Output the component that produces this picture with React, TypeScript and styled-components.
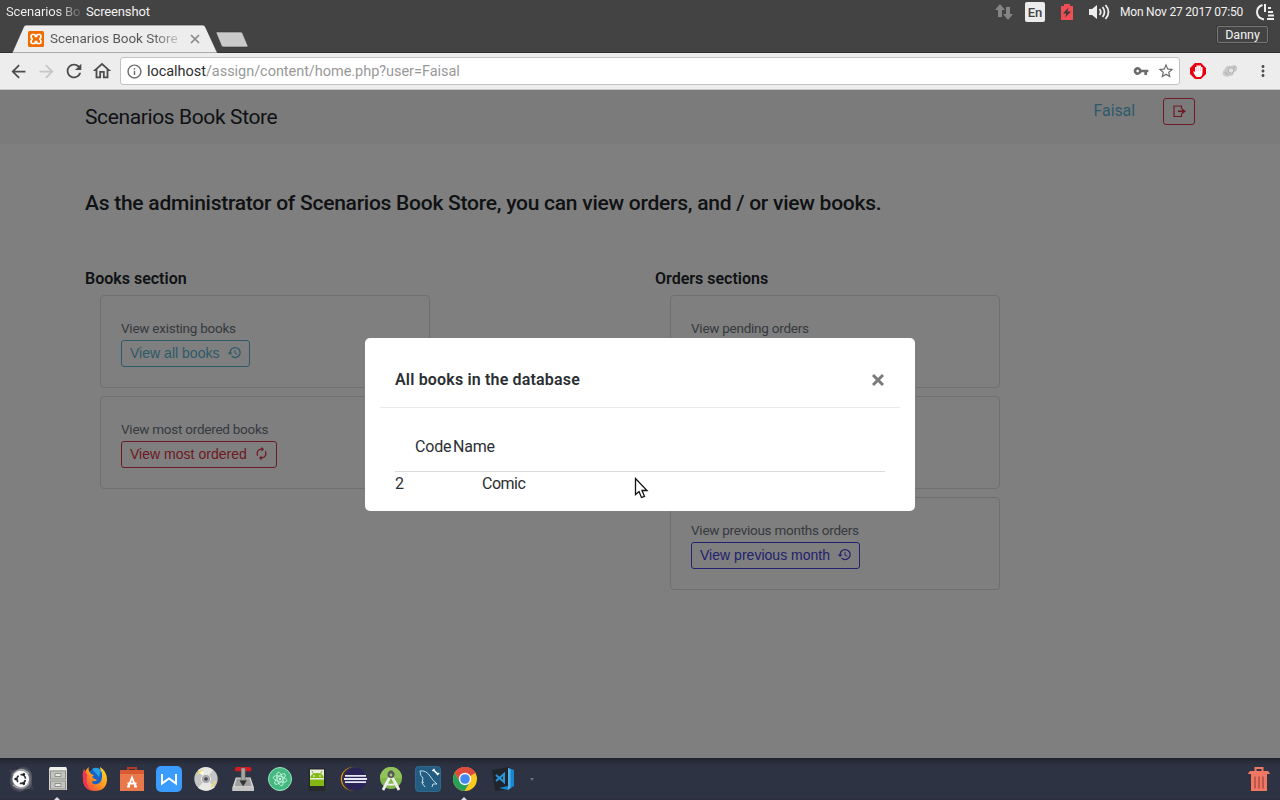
import React from 'react';
import styled, { createGlobalStyle } from 'styled-components';
import { MdArrowBack, MdArrowForward, MdRefresh, MdOutlineHome, MdInfoOutline, MdVpnKey, MdStarBorder, MdMoreVert, MdHistory, MdAutorenew } from 'react-icons/md';

const Global = createGlobalStyle`
  * { box-sizing: border-box; }
  body { margin: 0; font-family: Roboto, "Liberation Sans", sans-serif; overflow: hidden; }
  svg { display: block; flex: none; }
`;

const Desktop = styled.div`
  width: 1280px; height: 800px; display: flex; flex-direction: column; position: relative; overflow: hidden;
`;

/* System panel */
const Panel = styled.div`
  height: 24px; background: #434343; color: #f2f2f2; display: flex; align-items: center;
  padding: 0 5px 0 6px; font-size: 13px; line-height: 22px; white-space: nowrap; flex: none;
`;
const WindowTitle = styled.div`
  width: 80px; letter-spacing: -0.15px;
  background: linear-gradient(90deg, #f2f2f2 65%, #4a4a4a 97%);
  background-clip: text; -webkit-background-clip: text; color: transparent;
`;
const MenuTitle = styled.div`flex: 1; letter-spacing: -0.15px;`;
const Tray = styled.div`display: flex; align-items: center; height: 24px;`;
const TrayItem = styled.div<{ $gap: number }>`margin-right: ${p => p.$gap}px; display: flex;`;
const Language = styled.div`
  width: 20px; height: 20px; border-radius: 2px; background: #ececec; color: #434343;
  font: 500 13px/21px Roboto, sans-serif; text-align: center;
`;
const Clock = styled.div`width: 124px; margin-right: 12px; font-size: 12px; letter-spacing: -0.2px;`;

/* Tab strip */
const TabStrip = styled.div`
  height: 29px; background: #434343; border-bottom: 1px solid #303030; display: flex; align-items: flex-start;
  padding-left: 12px; flex: none;
`;
const Tab = styled.div`
  position: relative; width: 206px; height: 29px; display: flex; align-items: center; padding: 0 0 0 16px;
  z-index: 1;
`;
const TabShape = styled.svg`position: absolute; left: 0; top: 0; z-index: -1;`;
const TabTitle = styled.div`
  margin-left: 6px; width: 140px; font-size: 13.5px; letter-spacing: -0.05px; white-space: nowrap; padding-bottom: 2px;
  background: linear-gradient(90deg, #555 73%, #c8c8c8 92%);
  background-clip: text; -webkit-background-clip: text; color: transparent; flex: none;
`;
const NewTab = styled.svg`margin: 7px 0 0 -2px;`;
const Profile = styled.div`
  margin: 2px 12px 0 auto; width: 51px; height: 17px; border: 1px solid #777; border-radius: 2px; box-shadow: 0 0 0 1px #3a3a3a;
  color: #f4f4f4; font-size: 12.5px; line-height: 15px; text-align: center;
`;

/* Toolbar */
const Toolbar = styled.div`
  height: 37px; background: #ededed; border-bottom: 1px solid #c9c9c9; display: flex; align-items: center;
  padding: 0 8px 0 7px; color: #505050; flex: none;
`;
const NavButton = styled.div<{ $off?: boolean }>`
  width: 28px; height: 28px; display: flex; align-items: center; justify-content: center; color: ${p => (p.$off ? '#c6c6c6' : '#4d4d4d')};
  padding-right: 6px;
`;
const AddressBar = styled.div`
  width: 1060px; height: 28px; margin-left: 1px; background: #fff; border: 1px solid #c2c2c2; border-radius: 3px;
  display: flex; align-items: center; padding: 0 4px 0 5px; color: #6b6b6b;
`;
const Url = styled.div`
  flex: 1; margin-left: 4px; font-size: 14.5px; letter-spacing: -0.04px; color: #999; line-height: 26px; padding-top: 1px;
  span { color: #2e2e2e; }
`;
const KeyIcon = styled.div`width: 24px;`;
const Extensions = styled.div`display: flex; align-items: center; gap: 16px; padding-left: 10px;`;

/* Web page */
const Viewport = styled.main`flex: 1; background: #fff; color: #212529; position: relative; min-height: 0;`;
const SiteHeader = styled.header`
  height: 54px; background: #f7f7f8; padding: 0 85px; display: flex; align-items: flex-start;
`;
const Brand = styled.div`
  flex: 1; font-size: 21px; letter-spacing: -0.38px; line-height: 54px;
`;
const UserLink = styled.div`color: #5bb5d3; font-size: 16px; line-height: 41px; margin-right: 28px; letter-spacing: -0.1px;`;
const LogoutButton = styled.div`
  width: 32px; height: 27px; margin-top: 8px; border: 1px solid #dc3545; border-radius: 3px; color: #dc3545;
  display: flex; align-items: center; justify-content: center;
`;
const Headline = styled.h1`
  margin: 0; padding: 45px 85px 0; font-size: 21px; font-weight: 550; letter-spacing: -0.25px; line-height: 29px;
  white-space: nowrap;
`;
const Columns = styled.div`display: flex; padding: 49px 55px 0 85px;`;
const Column = styled.section`width: 570px;`;
const SectionTitle = styled.h2`margin: 0; font-size: 16px; font-weight: 600; line-height: 24px; height: 28px;`;
const Card = styled.div`
  width: 330px; height: 93px; margin: 0 0 8px 15px; padding: 22px 20px 0; border: 1px solid #dfdfdf; border-radius: 4px;
`;
const CardText = styled.div`
  color: #6c757d; font-size: 13.5px; letter-spacing: -0.25px; line-height: 21px; height: 22px; white-space: nowrap;
`;
const CardButton = styled.div<{ $color: string }>`
  display: inline-flex; align-items: center; height: 27px; padding: 0 8px; border: 1px solid ${p => p.$color}; border-radius: 3px;
  color: ${p => p.$color}; font: 14px/25px "Liberation Sans", sans-serif; letter-spacing: 0.02px; white-space: nowrap;
  svg { margin: -2px -1px 0 7px; }
`;

/* Dialog */
const Backdrop = styled.div`
  position: absolute; inset: 0; background: rgba(0, 0, 0, 0.5); display: flex; justify-content: center; align-items: flex-start; padding-top: 248px;
`;
const Dialog = styled.div`
  width: 550px; height: 173px; background: #fff; border-radius: 5px; padding: 0 15px; color: #2b2f33;
`;
const DialogHeader = styled.div`
  height: 70px; border-bottom: 1px solid #ebebeb; padding: 15px 15px 0; display: flex; align-items: center; justify-content: space-between;
`;
const DialogTitle = styled.div`font-size: 16px; font-weight: 600; letter-spacing: 0.17px; margin-top: -1px;`;
const TableHead = styled.div`
  margin: 0 15px; height: 64px; border-bottom: 1px solid #dcdcdc; padding: 14px 0 0 20px; display: flex; align-items: center; gap: 2px;
  font-size: 16px; line-height: 24px;
`;
const HeadCell = styled.div<{ $width: number }>`width: ${p => p.$width}px; letter-spacing: -0.2px;`;
const TableRow = styled.div`display: flex; margin: 0 15px; font-size: 16px; line-height: 24px; letter-spacing: -0.5px;`;
const CodeCell = styled.div`width: 87px;`;
const Pointer = styled.svg`position: absolute; left: 634px; top: 477px;`;

/* Dock */
const Dock = styled.footer`
  height: 42px; background: linear-gradient(#1f222b 0, #272b37 3px, #2e3343 8px, #2e3343 40px, #2d2b3a 42px);
  display: flex; align-items: flex-start; padding: 8px 8px 0; flex: none;
`;
const Launcher = styled.div`width: 37px; height: 34px; position: relative; svg { overflow: visible; }`;
const Running = styled.div`
  position: absolute; left: 9px; bottom: 0; width: 0; height: 0;
  border: 3px solid transparent; border-top: 0; border-bottom: 3px solid #dedee2;
`;
const Overflow = styled.div`width: 0; border: 2.5px solid transparent; border-top: 3px solid #6b6f7a; margin: 12px 0 0 4px;`;
const Trash = styled.div`margin-left: auto;`;

const Glyph = ({ children }: { children: React.ReactNode }) => <svg width="26" height="26" viewBox="0 0 26 26">{children}</svg>;

const apps: { id: string; running?: boolean; art: React.ReactNode }[] = [
  { id: 'dash', art: <>
    <defs><radialGradient id="dash"><stop offset=".5" stopColor="#8d9097" /><stop offset=".8" stopColor="#5c5f69" /><stop offset="1" stopColor="#3c404d" /></radialGradient></defs>
    <path d="M1 3Q8 6 13 1Q24-1 24 11Q23 19 26 24Q18 21 13 26Q1 26 2 14Q4 7 1 3Z" fill="url(#dash)" />
    <path d="M5 9Q13-1 21 8M21 17Q14 26 5 19" stroke="#a7a9ae" strokeWidth="1.5" fill="none" />
    <circle cx="12.8" cy="13" r="8.3" fill="#fff" /><circle cx="13.2" cy="13" r="4.3" fill="none" stroke="#30333b" strokeWidth="1.7" strokeDasharray="7 2" strokeDashoffset="-1" />
    <circle cx="7.6" cy="13" r="1.3" fill="#222" /><circle cx="15.8" cy="8.2" r="1.3" fill="#222" /><circle cx="15.8" cy="17.8" r="1.3" fill="#222" /></> },
  { id: 'files', running: true, art: <>
    <path d="M5 1h16l1 3v20H4V4z" fill="#d3d4cf" /><path d="M5 1h16l1 3H4z" fill="#f0f0ec" />
    <rect x="5.5" y="5" width="15" height="8" fill="#c3c4be" stroke="#90918b" /><rect x="5.5" y="15" width="15" height="8" fill="#c3c4be" stroke="#90918b" />
    <path d="M10 7.5h6v3h-6zM10 17.5h6v3h-6z" fill="#e7e7e3" stroke="#808080" strokeWidth=".8" /></> },
  { id: 'firefox', art: <>
    <defs><linearGradient id="fx" x1="1" x2="0" y2="1"><stop stopColor="#ffe32d" /><stop offset=".5" stopColor="#ff9420" /><stop offset="1" stopColor="#f0304c" /></linearGradient></defs>
    <circle cx="13.5" cy="12" r="9" fill="#1762c6" /><path d="M10 3Q15 0 19 4l-2 7z" fill="#24a0e8" />
    <path d="M2 3Q0 8 1 14Q2 25 13 25Q24 25 25 14Q25 5 18 1Q18 4 20 7Q21 17 15 18Q10 19 10 15Q13 16 15 14Q12 13 10 11L12 9Q9 9 7 5Q6 3 7 1Q4 3 3 6Z" fill="url(#fx)" />
    <path d="M2 3Q0 8 1 14Q2 21 8 24Q3 17 5 9Z" fill="#ee3358" /></> },
  { id: 'software', art: <>
    <path d="M9 6V2h8v4" fill="none" stroke="#b63a20" strokeWidth="2" /><path d="M1 4h24v21H1z" fill="#e9784a" /><path d="M1 4h24v4H1z" fill="#d95a32" />
    <path d="M8 20.5h3M15 20.5h3M9.5 20.5L13 11.5l3.5 9M8.5 17.5h9" fill="none" stroke="#fff" strokeWidth="1.8" /></> },
  { id: 'wps', art: <>
    <rect width="26" height="26" rx="5" fill="#3a9cff" /><path d="M6 8v9.5l7-5 7 5V8" stroke="#fff" strokeWidth="2" fill="none" /></> },
  { id: 'disc', art: <>
    <circle cx="13" cy="13" r="11.7" fill="#c5c5c4" /><path d="M13 13L5 4Q13-2 20 4zM13 13l9 8q-8 7-17 1z" fill="#e8e8e4" />
    <path d="M5 8a9 9 0 0 1 5-4M18 21a9 9 0 0 0 4-6" stroke="#e9dc7c" strokeWidth="2" fill="none" />
    <circle cx="13" cy="13" r="4.7" fill="#aaa" stroke="#eee" /><circle cx="13" cy="13" r="1.8" fill="#454852" /><circle cx="9" cy="7" r="1.8" fill="#fffde0" /></> },
  { id: 'disk-tool', art: <g transform="translate(2.5 1) scale(.82 .96)">
    <path d="M4 11h18l4 10v4H0v-4z" fill="#d8d8d6" /><path d="M5 12h16l2.5 8h-21z" fill="#a0a19f" /><path d="M0 21h26v4H0z" fill="#c4c5c2" />
    <rect x="3" y="0" width="20" height="4.5" rx="2" fill="#d71920" /><path d="M10.5 1h5v13h-5z" fill="#a5a7a7" stroke="#555" strokeWidth=".5" /><path d="M8.5 14h9l-4.5 6z" fill="#333" /></g> },
  { id: 'atom', art: <>
    <circle cx="13" cy="13" r="11.5" fill="#45b882" stroke="#9ce6bf" strokeWidth="1" />
    <g fill="none" stroke="#c5f3dc" strokeWidth=".9"><ellipse cx="13" cy="13" rx="7" ry="2.7" transform="rotate(15 13 13)" /><ellipse cx="13" cy="13" rx="7" ry="2.7" transform="rotate(75 13 13)" /><ellipse cx="13" cy="13" rx="7" ry="2.7" transform="rotate(135 13 13)" /></g>
    <circle cx="13" cy="13" r="1.1" fill="#fff" /></> },
  { id: 'emulator', art: <>
    <rect x="4.5" y="2" width="17" height="23" rx="1" fill="#262a2b" /><rect x="6" y="3.5" width="14" height="16.5" fill="#e9ecdf" />
    <path d="M6 12q1-5 7-5t7 5z" fill="#83b814" /><path d="M6 13.5h14V20H6z" fill="#83b814" /><path d="M8 5l2 4M18 5l-2 4" stroke="#83b814" />
    <circle cx="10" cy="10" r=".8" fill="#fff" /><circle cx="16" cy="10" r=".8" fill="#fff" /></> },
  { id: 'eclipse', art: <>
    <circle cx="11.5" cy="13" r="11.7" fill="#f39418" /><circle cx="13" cy="13" r="12" fill="#2e3343" /><circle cx="14.5" cy="13" r="11.3" fill="#2b2459" />
    <path d="M4 9.8h21M3 13h23M4 16.2h21" stroke="#e8e6f0" strokeWidth="1.8" /></> },
  { id: 'android-studio', art: <>
    <circle cx="13" cy="12" r="11" fill="#82b84b" /><path d="M2 12a11 11 0 0 1 22 0z" fill="#91c35a" />
    <path d="M13 9L5 24M13 9l8 15" stroke="#eeeeec" strokeWidth="2.7" /><path d="M7 17q6 3.5 12 0" stroke="#eee" strokeWidth="2" fill="none" />
    <circle cx="13" cy="8.5" r="3.5" fill="#555" /><path d="M11.5 4.5h3v4h-3z" fill="#555" /><circle cx="13" cy="9" r="1.4" fill="#a7c77f" /></> },
  { id: 'mysql', art: <>
    <rect x=".5" y=".5" width="25" height="25" rx="3" fill="#235d82" stroke="#31698e" />
    <path d="M5 5Q11 4 15 10Q18 15 22 18L18 18L17 21M5 5Q5 10 8 12L7 17L10 21M7 17L9 16" fill="none" stroke="#c6dae5" strokeWidth="1" />
    <path d="M18.5 4l4 4M17.5 5l2-2M22 9l2-2" stroke="#fff" strokeWidth="1.7" /></> },
  { id: 'chrome', running: true, art: <>
    <circle cx="13" cy="13" r="12" fill="#fbc91c" /><path d="M13 13L2.6 7A12 12 0 0 1 23.4 7z" fill="#dd4b3e" /><path d="M13 7h10.5A12 12 0 0 0 2.6 7L8 16z" fill="#dd4b3e" />
    <path d="M2.6 7A12 12 0 0 0 12.5 25L18 16H8z" fill="#27a05b" /><circle cx="13" cy="13" r="6.2" fill="#f5f5f5" /><circle cx="13" cy="13" r="4.8" fill="#4688f1" /></> },
  { id: 'vscode', art: <g transform="translate(3 0)">
    <path d="M0 4L17 1l2 22-16 2z" fill="#20242b" /><path d="M16 2l6 2v16l-6 4L7 22l9-2z" fill="#1688d0" /><path d="M16 2l2.5 1v19l-2.5 2z" fill="#52afe4" />
    <path d="M4 9l8 7V8l-8 7" fill="none" stroke="#2996da" strokeWidth="2" /></g> },
];

type Action = { text?: string; label?: string; color?: string; icon?: typeof MdHistory };

const bookActions: Action[] = [
  { text: 'View existing books', label: 'View all books', color: '#5bb5d3', icon: MdHistory },
  { text: 'View most ordered books', label: 'View most ordered', color: '#dc3545', icon: MdAutorenew },
];
const orderActions: Action[] = [
  { text: 'View pending orders' },
  {},
  { text: 'View previous months orders', label: 'View previous month', color: '#4444dd', icon: MdHistory },
];

function ActionCards({ items }: { items: Action[] }) {
  return <>{items.map(({ text, label, color = '#333', icon: Icon }, i) => (
    <Card key={i}>
      <CardText>{text}</CardText>
      {label && Icon && <CardButton $color={color}>{label}<Icon size={15} /></CardButton>}
    </Card>
  ))}</>;
}

export default function App() {
  return (
    <Desktop>
      <Global />
      <Panel>
        <WindowTitle>Scenarios Bo</WindowTitle>
        <MenuTitle>Screenshot</MenuTitle>
        <Tray>
          <TrayItem $gap={12}><svg width="18" height="18" viewBox="0 0 18 18" fill="#858585"><path d="M5 1l5 6H7v7H3V7H0zM13 17l-5-6h3V4h4v7h3z" /></svg></TrayItem>
          <TrayItem $gap={16}><Language>En</Language></TrayItem>
          <TrayItem $gap={16}><svg width="12" height="16" viewBox="0 0 12 16"><path d="M3 0h6v2h3v14H0V2h3z" fill="#f04e57" /><path d="M7.5 3.5L2 9.5h3.3L4 13.5l6-6H6.5z" fill="#3a3a3a" /></svg></TrayItem>
          <TrayItem $gap={10}><svg width="21" height="16" viewBox="0 0 21 16"><path d="M0 5h3l5-4v14l-5-4H0z" fill="#eee" /><g fill="none" stroke="#eee" strokeWidth="1.8"><path d="M10.5 5q2.5 3 0 6M13.5 3q4 5 0 10M16.5 1q6 7 0 14" /></g></svg></TrayItem>
          <Clock>Mon Nov 27 2017 07:50</Clock>
          <svg width="19" height="18" viewBox="0 0 19 18" fill="none" stroke="#eee" strokeWidth="2"><path d="M6.5 2Q1 4 1 9q0 6 7 7.5M9 1v8M12 5h3M12 9h5M12 12.5h6M11 16h7" /></svg>
        </Tray>
      </Panel>
      <TabStrip>
        <Tab>
          <TabShape width="206" height="29" viewBox="0 0 206 29"><path d="M0 29L11.5 3Q12.5 1 14 1H191Q192.5 1 193.5 3L205.5 29Z" fill="#ededed" stroke="#333" strokeWidth=".7" /></TabShape>
          <svg width="16" height="16" viewBox="0 0 16 16"><rect width="16" height="16" rx="1.5" fill="#ef6c00" /><path d="M4.5 3.5h1.500q1.5 0 1.500 2h1q0-2 1.500-2h1.500q1.500 0 1.500 1.700 0 1.300-1.200 2.800 1.200 1.500 1.200 2.800 0 1.700-1.500 1.700H10q-1.500 0-1.500-2h-1q0 2-1.500 2H4.500Q3 12.500 3 10.800 3 9.500 4.200 8 3 6.500 3 5.200 3 3.500 4.500 3.500z" fill="none" stroke="#fff" strokeWidth="1.7" /></svg>
          <TabTitle>Scenarios Book Store</TabTitle>
          <svg width="10" height="10" viewBox="0 0 10 10" stroke="#888" strokeWidth="1.7"><path d="M1 1l8 8M9 1L1 9" /></svg>
        </Tab>
        <NewTab width="34" height="17" viewBox="0 0 34 17"><path d="M0 1.500Q0 1 1 1H24.500Q26 1 26.500 2L32 15Q32 16 31 16H7.500Q6 16 5.500 15z" fill="#cacaca" stroke="#333" strokeWidth=".6" /></NewTab>
        <Profile>Danny</Profile>
      </TabStrip>
      <Toolbar>
        <NavButton><MdArrowBack size={21} /></NavButton>
        <NavButton $off><MdArrowForward size={21} /></NavButton>
        <NavButton><MdRefresh size={22} /></NavButton>
        <NavButton><MdOutlineHome size={22} /></NavButton>
        <AddressBar>
          <MdInfoOutline size={17} />
          <Url><span>localhost</span>/assign/content/home.php?user=Faisal</Url>
          <KeyIcon><MdVpnKey size={16} /></KeyIcon>
          <MdStarBorder size={18} />
        </AddressBar>
        <Extensions>
          <svg width="16" height="16" viewBox="0 0 16 16"><path d="M5 0h6l5 5v6l-5 5H5l-5-5V5z" fill="#e8000f" /><path d="M5.5 13Q3 9.5 3.5 8l1.5 1V4h1.5V2.500h4.500V4h1.500v6q0 3-2.500 4H7q-1-.2-1.500-1z" fill="#fff" /><path d="M6.7 3.500V8M8.600 3V8M10.500 4V8" stroke="#f08088" strokeWidth=".4" /></svg>
          <svg width="16" height="16" viewBox="0 0 16 16"><path d="M1 12Q0 8 3 6Q4 2 9 3Q14 1 15 4Q16 8 12 9Q12 13 8 13Q4 15 1 12z" fill="#c9c9c9" /><circle cx="9" cy="7.5" r="2.8" fill="#e2e2e2" stroke="#b0b0b0" /><path d="M3 9l3 3M12 3l1 2" stroke="#a9a9a9" /></svg>
          <MdMoreVert size={18} />
        </Extensions>
      </Toolbar>
      <Viewport>
        <SiteHeader>
          <Brand>Scenarios Book Store</Brand>
          <UserLink>Faisal</UserLink>
          <LogoutButton><svg width="13" height="13" viewBox="0 0 13 13" fill="none" stroke="currentColor"><path d="M8.5 4V1H1v10.5h7.5v-3" strokeWidth="1.2" /><path d="M5 6.25h5" strokeWidth="1.7" /><path d="M9 3.2l4 3.05-4 3.05z" fill="currentColor" stroke="none" /></svg></LogoutButton>
        </SiteHeader>
        <Headline>As the administrator of Scenarios Book Store, you can view orders, and / or view books.</Headline>
        <Columns>
          <Column><SectionTitle>Books section</SectionTitle><ActionCards items={bookActions} /></Column>
          <Column><SectionTitle>Orders sections</SectionTitle><ActionCards items={orderActions} /></Column>
        </Columns>
        <Backdrop>
          <Dialog>
            <DialogHeader>
              <DialogTitle>All books in the database</DialogTitle>
              <svg width="14" height="14" viewBox="0 0 14 14" stroke="#7b7b7b" strokeWidth="3"><path d="M2 2l10 10M12 2L2 12" /></svg>
            </DialogHeader>
            <TableHead><HeadCell $width={36}>Code</HeadCell><HeadCell $width={44}>Name</HeadCell></TableHead>
            <TableRow><CodeCell>2</CodeCell><div>Comic</div></TableRow>
          </Dialog>
        </Backdrop>
      </Viewport>
      <Dock>
        {apps.map(app => <Launcher key={app.id}><Glyph>{app.art}</Glyph>{app.running && <Running />}</Launcher>)}
        <Overflow />
        <Trash><svg width="26" height="26" viewBox="0 0 26 26" fill="#f07862"><path d="M8.5 5V1h9v4h-2V3h-5v2zM2 7.5l2-2.5h18l2 2.5V8H2zM5 8h16v17H5z" /><path d="M9 10.5v12M13 10.5v12M17 10.5v12" stroke="#b9544b" strokeWidth="1.8" /></svg></Trash>
      </Dock>
      <Pointer width="16" height="22" viewBox="0 0 16 22"><path d="M1.5 1.5v16l3.5-3 2.5 6 3-1.2-2.5-5.8h5z" fill="#fff" stroke="#111" strokeWidth="1.3" /></Pointer>
    </Desktop>
  );
}
